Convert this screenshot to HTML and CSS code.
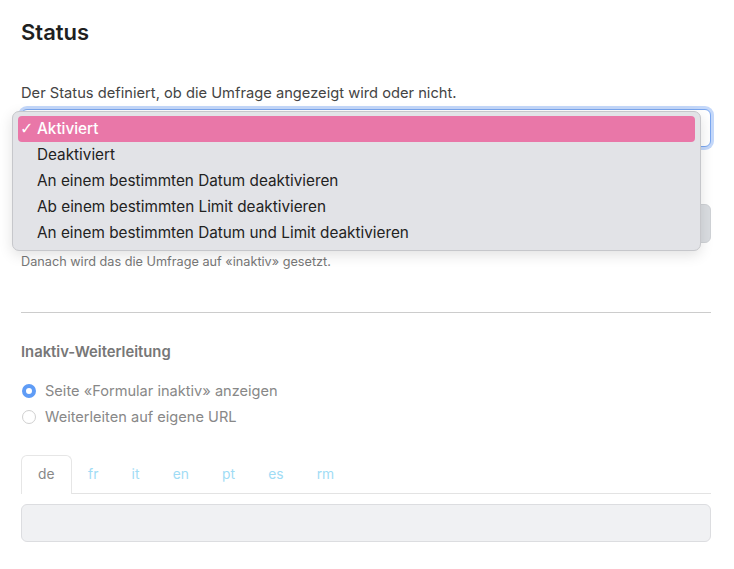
FILE: index.html
```html
<!DOCTYPE html>
<html lang="de">
<head>
    <meta charset="UTF-8">
    <meta name="viewport" content="width=device-width, initial-scale=1.0">
    <title>Status</title>
    <link rel="stylesheet" href="styles.css">
</head>
<body>
    <div class="page">
        <h1>Status</h1>
        <p class="intro">Der Status definiert, ob die Umfrage angezeigt wird oder nicht.</p>

        <div class="select-wrap">
            <div class="select focused"></div>
            <ul class="dropdown">
                <li class="selected"><span class="check">&#10003;</span>Aktiviert</li>
                <li>Deaktiviert</li>
                <li>An einem bestimmten Datum deaktivieren</li>
                <li>Ab einem bestimmten Limit deaktivieren</li>
                <li>An einem bestimmten Datum und Limit deaktivieren</li>
            </ul>
        </div>

        <div class="field-disabled"></div>
        <p class="help">Danach wird das die Umfrage auf «inaktiv» gesetzt.</p>

        <hr class="divider">

        <h2>Inaktiv-Weiterleitung</h2>
        <div class="radios">
            <label class="radio"><span class="dot checked"></span>Seite «Formular inaktiv» anzeigen</label>
            <label class="radio"><span class="dot"></span>Weiterleiten auf eigene URL</label>
        </div>

        <div class="tabs">
            <span class="tab active">de</span>
            <span class="tab">fr</span>
            <span class="tab">it</span>
            <span class="tab">en</span>
            <span class="tab">pt</span>
            <span class="tab">es</span>
            <span class="tab">rm</span>
        </div>
        <div class="text-input"></div>
    </div>
</body>
</html>
```

FILE: styles.css
```css
body {
    margin: 0;
    padding: 0;
    background-color: #ffffff;
    font-family: Inter, "Noto Sans", sans-serif;
    color: #222;
}

.page {
    padding: 19px 23px 0 21px;
}

h1 {
    font-size: 22px;
    font-weight: 600;
    margin: 0;
    line-height: 26px;
    color: #1f1f1f;
}

.intro {
    font-size: 14.7px;
    color: #444;
    margin: 38px 0 0 0;
    line-height: 20px;
}

.select-wrap {
    position: relative;
    margin-top: 6px;
}

.select {
    height: 36px;
    border: 1px solid #7aa7f0;
    border-radius: 6px;
    background: #fff;
    box-shadow: 0 0 0 3px #c4d8fa;
}

.dropdown {
    position: absolute;
    top: 2px;
    left: -9px;
    width: 677px;
    margin: 0;
    padding: 5px 5px 4px 5px;
    list-style: none;
    background: #e2e3e7;
    border: 1px solid #c6c7cb;
    border-radius: 7px;
    box-shadow: 0 4px 14px rgba(0, 0, 0, 0.12);
    z-index: 2;
}

.dropdown li {
    font-size: 15.3px;
    line-height: 26px;
    padding-left: 19px;
    color: #222;
    position: relative;
}

.dropdown li:first-child {
    margin-top: -1px;
}

.dropdown li.selected {
    background: #e977a8;
    color: #fff;
    border-radius: 4px;
    font-weight: 500;
}

.check {
    position: absolute;
    left: 2px;
    top: 0;
    font-size: 16px;
    font-family: "DejaVu Sans", sans-serif;
}

.field-disabled {
    margin-top: 57px;
    height: 37px;
    background: #dadde1;
    border: 1px solid #cfd2d6;
    border-radius: 6px;
}

.help {
    font-size: 12.7px;
    color: #777;
    margin: 11px 0 0 0;
    line-height: 16px;
}

.divider {
    border: none;
    border-top: 1px solid #cccccc;
    margin: 42px 0 0 0;
}

h2 {
    font-size: 14.8px;
    font-weight: 600;
    color: #777;
    margin: 29px 0 0 0;
    line-height: 20px;
}

.radios {
    margin-top: 19px;
    display: flex;
    flex-direction: column;
    gap: 6px;
}

.radio {
    display: flex;
    align-items: center;
    gap: 9px;
    font-size: 14.6px;
    color: #888;
    line-height: 20px;
}

.dot {
    width: 12px;
    height: 12px;
    border: 1px solid #d0d0d0;
    border-radius: 50%;
    background: #fff;
    margin-left: 1px;
}

.dot.checked {
    width: 6px;
    height: 6px;
    border: 4px solid #5f9cf6;
}

.tabs {
    display: flex;
    margin-top: 28px;
    border-bottom: 1px solid #e3e3e3;
}

.tab {
    font-size: 13.8px;
    color: #9fdcf5;
    padding: 10px 15.6px 11px 15.6px;
    line-height: 17px;
    border: 1px solid transparent;
    border-bottom: none;
    border-radius: 6px 6px 0 0;
    margin-bottom: -1px;
}

.tab.active {
    color: #888;
    border-color: #e6e6e6;
    background: #fff;
    padding-left: 16px;
    padding-right: 16px;
}

.text-input {
    margin-top: 10px;
    height: 36px;
    background: #f0f1f3;
    border: 1px solid #dcdde0;
    border-radius: 6px;
}
```
